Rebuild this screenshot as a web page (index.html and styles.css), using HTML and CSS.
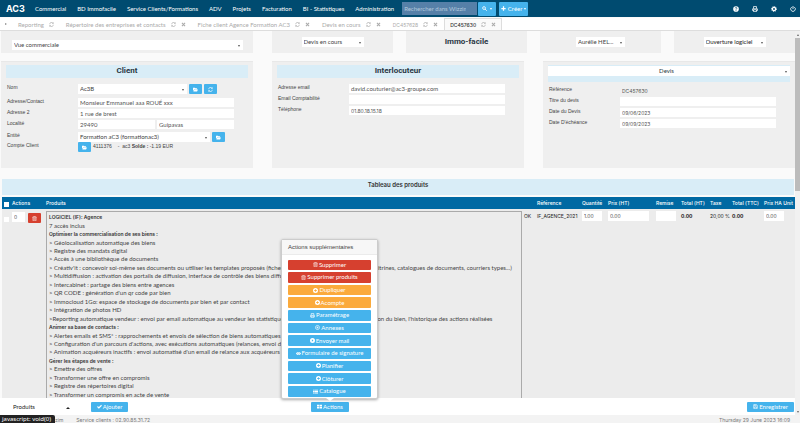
FILE: index.html
```html
<!DOCTYPE html>
<html lang="fr">
<head>
<meta charset="utf-8">
<meta name="viewport" content="width=device-width, initial-scale=1">
<title>AC3 - DC457630</title>
<link rel="stylesheet" href="styles.css">
</head>
<body>
<svg class="sprite" aria-hidden="true">
  <symbol id="refresh" viewBox="0 0 16 16"><path d="M2 7a6 6 0 0 1 11-3M14 9a6 6 0 0 1-11 3M14 1v4h-4M2 15v-4h4" fill="none" stroke="currentColor" stroke-width="2"/></symbol>
  <symbol id="close" viewBox="0 0 16 16"><path d="M3 3l10 10M13 3L3 13" stroke="currentColor" stroke-width="3.4"/></symbol>
  <symbol id="folder" viewBox="0 0 16 16"><path d="M0 2h6l2 2h5v3H4L0 13zM4.500 8H16l-3 6H1z" fill="currentColor"/></symbol>
  <symbol id="trash" viewBox="0 0 16 16"><path d="M1 4h14M5.500 3.500V1h5v2.500M3 4v11h10V4M6.300 6.500v6M9.700 6.500v6" fill="none" stroke="currentColor" stroke-width="1.700"/></symbol>
  <symbol id="plus-circle" viewBox="0 0 16 16"><path fill-rule="evenodd" d="M8 0a8 8 0 1 0 0 16A8 8 0 0 0 8 0zM6.700 4h2.600v2.700H12v2.600H9.300V12H6.700V9.300H4V6.700h2.700z" fill="currentColor"/></symbol>
  <symbol id="arrow-circle" viewBox="0 0 16 16"><path fill-rule="evenodd" d="M8 0a8 8 0 1 0 0 16A8 8 0 0 0 8 0zM6 4l5 4-5 4z" fill="currentColor"/></symbol>
  <symbol id="ring" viewBox="0 0 16 16"><circle cx="8" cy="8" r="6.500" fill="none" stroke="currentColor" stroke-width="2"/><path d="M5 8h6M8 5v6" stroke="currentColor" stroke-width="2"/></symbol>
  <symbol id="print" viewBox="0 0 16 16"><path d="M4 7V1.500h8V7M4 12H1.500V7.500h13V12H12M4 10h8v5H4z" fill="none" stroke="currentColor" stroke-width="2"/></symbol>
  <symbol id="eye" viewBox="0 0 16 16"><path fill-rule="evenodd" d="M0 8c4-6.500 12-6.500 16 0-4 6.500-12 6.500-16 0zm8-3a3 3 0 1 0 0 6 3 3 0 0 0 0-6z" fill="currentColor"/><circle cx="8" cy="8" r="1.800" fill="currentColor"/></symbol>
  <symbol id="list" viewBox="0 0 16 16"><path d="M0 2h3v3H0zM4 2h12v3H4zM0 6.500h3v3H0zM4 6.500h12v3H4zM0 11h3v3H0zM4 11h12v3H4z" fill="currentColor"/></symbol>
  <symbol id="grid" viewBox="0 0 16 16"><path d="M0 2h7.300v5.300H0zM8.700 2H16v5.300H8.700zM0 8.700h7.300V14H0zM8.700 8.700H16V14H8.700z" fill="currentColor"/></symbol>
  <symbol id="check" viewBox="0 0 16 16"><path d="M1.500 8l4.500 4.500L14.500 4" fill="none" stroke="currentColor" stroke-width="3.600"/></symbol>
  <symbol id="save" viewBox="0 0 16 16"><path d="M2 2h9l3 3v9H2zM5 2v4h5V2M4.500 14V9.500h7V14" fill="none" stroke="currentColor" stroke-width="1.800"/></symbol>
  <symbol id="search" viewBox="0 0 16 16"><circle cx="6.500" cy="6.500" r="4.500" fill="none" stroke="currentColor" stroke-width="2.600"/><path d="M10 10l5 5" stroke="currentColor" stroke-width="3"/></symbol>
  <symbol id="plus" viewBox="0 0 16 16"><path d="M8 1v14M1 8h14" stroke="currentColor" stroke-width="4"/></symbol>
  <symbol id="help" viewBox="0 0 16 16"><circle cx="8" cy="8" r="7.500" fill="currentColor"/><path d="M5.700 6.200C5.700 3 10.600 3.200 10.500 6 10.400 7.800 8 7.600 8 9.800M8 11v2" fill="none" stroke="#004b70" stroke-width="1.900"/></symbol>
  <symbol id="gear" viewBox="0 0 16 16"><circle cx="8" cy="8" r="4.300" fill="none" stroke="currentColor" stroke-width="3.600"/><circle cx="8" cy="8" r="6.700" fill="none" stroke="currentColor" stroke-width="2.400" stroke-dasharray="2.700 2.560"/></symbol>
  <symbol id="power" viewBox="0 0 16 16"><path d="M4.500 3a6.200 6.200 0 1 0 7 0M8 0v8" fill="none" stroke="currentColor" stroke-width="2.200"/></symbol>
</svg>

<header class="navbar">
  <a class="brand" href="#">AC3</a>
  <nav class="menu">
    <a href="#">Commercial</a><a href="#">BD Immofacile</a><a href="#">Service Clients/Formations</a><a href="#">ADV</a><a href="#">Projets</a><a href="#">Facturation</a><a href="#">BI - Statistiques</a><a href="#">Administration</a>
  </nav>
  <form class="search">
    <input type="search" aria-label="Rechercher" placeholder="Rechercher dans Wizzim">
    <button type="button" class="btn" aria-label="Rechercher"><svg class="icon"><use href="#search"/></svg><span class="caret"></span></button>
  </form>
  <button type="button" class="btn create"><svg class="icon"><use href="#plus"/></svg>Créer<span class="caret"></span></button>
  <div class="tools">
    <a href="#" aria-label="Aide"><svg class="icon"><use href="#help"/></svg></a>
    <a href="#" aria-label="Imprimer"><svg class="icon"><use href="#print"/></svg></a>
    <a href="#" aria-label="Réglages"><svg class="icon"><use href="#gear"/></svg></a>
    <a href="#" aria-label="Déconnexion"><svg class="icon"><use href="#power"/></svg></a>
  </div>
</header>

<nav class="tabs">
  <span class="tab-arrow"></span>
  <a class="tab" href="#">Reporting<svg class="icon"><use href="#refresh"/></svg></a>
  <a class="tab" href="#">Répertoire des entreprises et contacts<svg class="icon"><use href="#refresh"/></svg><svg class="icon"><use href="#close"/></svg></a>
  <a class="tab" href="#">Fiche client Agence Formation AC3<svg class="icon"><use href="#refresh"/></svg><svg class="icon"><use href="#close"/></svg></a>
  <a class="tab" href="#">Devis en cours<svg class="icon"><use href="#refresh"/></svg><svg class="icon"><use href="#close"/></svg></a>
  <a class="tab code" href="#">DC457628<svg class="icon"><use href="#refresh"/></svg><svg class="icon"><use href="#close"/></svg></a>
  <a class="tab code active" href="#"><span>DC457630</span><svg class="icon"><use href="#refresh"/></svg><svg class="icon"><use href="#close"/></svg></a>
</nav>

<div class="workspace">
  <div class="column">
    <main class="content">
      <div class="filters">
        <div class="filter wide"><div class="select view"><select aria-label="Vue"><option>Vue commerciale</option></select></div></div>
        <div class="filter"><div class="select status"><select aria-label="Statut"><option>Devis en cours</option></select></div></div>
        <div class="filter"><h2>Immo-facile</h2></div>
        <div class="filter"><div class="select owner"><select aria-label="Responsable"><option>Aurélie HEL...</option></select></div></div>
        <div class="filter"><div class="select opening"><select aria-label="Ouverture"><option>Ouverture logiciel</option></select></div></div>
      </div>

      <div class="cards">
        <section class="card">
          <h2 class="card-title">Client</h2>
          <div class="fields">
            <div class="field tall"><label for="nom">Nom</label><div class="select name"><select id="nom"><option>Ac3B</option></select></div><button type="button" class="btn square" aria-label="Ouvrir"><svg class="icon"><use href="#folder"/></svg></button><button type="button" class="btn square" aria-label="Actualiser"><svg class="icon"><use href="#refresh"/></svg></button></div>
            <div class="field"><label for="adr">Adresse/Contact</label><div class="inputs"><input id="adr" value="Monsieur Emmanuel aaa ROUÉ xxx"></div></div>
            <div class="field"><label for="adr2">Adresse 2</label><div class="inputs"><input id="adr2" value="1 rue de brest"></div></div>
            <div class="field"><label for="cp">Localité</label><div class="inputs"><input id="cp" value="29490"><input aria-label="Ville" value="Guipavas"></div></div>
            <div class="field entity"><label for="ent">Entité</label><div class="select entity-name"><select id="ent"><option>Formation aC3 (formationac3)</option></select></div><button type="button" class="btn square" aria-label="Ouvrir l'entité"><svg class="icon"><use href="#folder"/></svg></button></div>
            <div class="field account"><span class="label">Compte Client</span><button type="button" class="btn square" aria-label="Ouvrir le compte"><svg class="icon"><use href="#folder"/></svg></button><span>4111376</span><span class="balance">- &nbsp;ac3 <b>Solde :</b> -1.19 EUR</span></div>
          </div>
        </section>

        <section class="card">
          <h2 class="card-title">Interlocuteur</h2>
          <div class="fields">
            <div class="field"><label for="mail">Adresse email</label><div class="inputs"><input id="mail" value="david.couturier@ac3-groupe.com"></div></div>
            <div class="field"><label for="compta">Email Comptabilité</label><div class="inputs"><input id="compta"></div></div>
            <div class="field"><label for="tel">Téléphone</label><div class="inputs"><input id="tel" class="number" value="01.80.18.15.18"></div></div>
          </div>
        </section>

        <section class="card">
          <div class="card-title type"><div class="select"><select aria-label="Type"><option>Devis</option></select></div></div>
          <div class="fields compact">
            <div class="field"><label for="ref">Référence</label><div class="inputs"><input id="ref" class="plain number" value="DC457630" readonly></div></div>
            <div class="field"><label for="titre">Titre du devis</label><div class="inputs"><input id="titre"></div></div>
            <div class="field"><label for="date">Date du Devis</label><div class="inputs"><input id="date" class="number" value="09/06/2023"></div></div>
            <div class="field"><label for="ech">Date D'échéance</label><div class="inputs"><input id="ech" class="number" value="09/09/2023"></div></div>
          </div>
        </section>
      </div>

      <h3 class="section-title">Tableau des produits</h3>
      <table class="products">
        <colgroup><col class="c-check"><col class="c-actions"><col><col class="c-ok"><col class="c-ref"><col class="c-qty"><col class="c-price"><col class="c-disc"><col class="c-total"><col class="c-tax"><col class="c-ttc"><col class="c-ha"></colgroup>
        <thead><tr><th><input type="checkbox" aria-label="Tout sélectionner"></th><th>Actions</th><th>Produits</th><th></th><th>Référence</th><th>Quantité</th><th>Prix (HT)</th><th>Remise</th><th>Total (HT)</th><th>Taxe</th><th>Total (TTC)</th><th>Prix HA Unit</th></tr></thead>
        <tbody><tr>
          <td><input type="checkbox" aria-label="Sélectionner la ligne"></td>
          <td><div class="row-actions"><input aria-label="Ordre" value="0"><button type="button" class="btn danger square" aria-label="Supprimer la ligne"><svg class="icon"><use href="#trash"/></svg></button></div></td>
          <td class="desc-cell"><div class="description">
            <strong>LOGICIEL (IF): Agence</strong>
            <span>7 accès inclus</span>
            <strong>Optimiser la commercialisation de ses biens :</strong>
            <span>&gt; Géolocalisation automatique des biens</span>
            <span>&gt; Registre des mandats digital</span>
            <span>&gt; Accès à une bibliothèque de documents</span>
            <span>&gt; Créativ'it : concevoir soi-même ses documents ou utiliser les templates proposés (fiches commerciales, affichettes pour les vitrines, catalogues de documents, courriers types...)</span>
            <span>&gt; Multidiffusion : activation des portails de diffusion, interface de contrôle des biens diffusés</span>
            <span>&gt; Intercabinet : partage des biens entre agences</span>
            <span>&gt; QR CODE : génération d'un qr code par bien</span>
            <span>&gt; Immocloud 1Go: espace de stockage de documents par bien et par contact</span>
            <span>&gt; Intégration de photos HD</span>
            <span>&gt;Reporting automatique vendeur : envoi par email automatique au vendeur les statistiques de consultation et commercialisation du bien, l'historique des actions réalisées</span>
            <strong>Animer sa base de contacts :</strong>
            <span>&gt; Alertes emails et SMS* : rapprochements et envois de sélection de biens automatiques par email</span>
            <span>&gt; Configuration d'un parcours d'actions, avec exécutions automatiques (relances, envoi d'email)</span>
            <span>&gt; Animation acquéreurs inactifs : envoi automatisé d'un email de relance aux acquéreurs sans activité récente (selon critères)</span>
            <strong>Gérer les étapes de vente :</strong>
            <span>&gt; Emettre des offres</span>
            <span>&gt; Transformer une offre en compromis</span>
            <span>&gt; Registre des répertoires digital</span>
            <span>&gt; Transformer un compromis en acte de vente</span>
          </div></td>
          <td class="dark">OK</td><td class="dark">IF_AGENCE_2021</td>
          <td><input class="cell" aria-label="Quantité" value="1.00"></td>
          <td><input class="cell price" aria-label="Prix" value="0.00"></td>
          <td><input class="cell" aria-label="Remise"></td>
          <td class="dark"><b>0.00</b></td><td class="dark">20,00 %</td><td class="dark"><b>0.00</b></td>
          <td><input class="cell" aria-label="Prix HA" value="0.00"></td>
        </tr></tbody>
      </table>
    </main>

    <footer class="actionbar">
      <div class="select up kind"><select aria-label="Catégorie"><option>Produits</option></select></div>
      <button type="button" class="btn add"><svg class="icon"><use href="#check"/></svg>Ajouter</button>
      <div class="more">
        <div class="popover">
          <h4>Actions supplémentaires</h4>
          <div class="popover-body">
            <button type="button" class="btn danger"><svg class="icon"><use href="#trash"/></svg>Supprimer</button>
            <button type="button" class="btn danger"><svg class="icon"><use href="#trash"/></svg>Supprimer produits</button>
            <button type="button" class="btn warning"><svg class="icon"><use href="#plus-circle"/></svg>Dupliquer</button>
            <button type="button" class="btn warning"><svg class="icon"><use href="#plus-circle"/></svg>Acompte</button>
            <button type="button" class="btn"><svg class="icon"><use href="#print"/></svg>Paramétrage</button>
            <button type="button" class="btn"><svg class="icon"><use href="#ring"/></svg>Annexes</button>
            <button type="button" class="btn"><svg class="icon"><use href="#arrow-circle"/></svg>Envoyer mail</button>
            <button type="button" class="btn"><svg class="icon"><use href="#eye"/></svg>Formulaire de signature</button>
            <button type="button" class="btn"><svg class="icon"><use href="#plus-circle"/></svg>Planifier</button>
            <button type="button" class="btn"><svg class="icon"><use href="#plus-circle"/></svg>Clôturer</button>
            <button type="button" class="btn"><svg class="icon"><use href="#list"/></svg>Catalogue</button>
          </div>
        </div>
        <button type="button" class="btn"><svg class="icon"><use href="#grid"/></svg>Actions</button>
      </div>
      <button type="button" class="btn save"><svg class="icon"><use href="#save"/></svg>Enregistrer</button>
    </footer>
  </div>
  <div class="scrollbar"><span class="caret flip"></span><div class="thumb"></div><span class="caret"></span></div>
</div>

<div class="statusbar"><div class="link-hint">javascript: void(0)</div><span class="site">zim</span><span>Service clients : 02.90.85.31.72</span><span class="date">Thursday 29 June 2023 16:09</span></div>
</body>
</html>
```
FILE: styles.css
```css
* { box-sizing: border-box; }

:root {
  --ui: Lato, "Open Sans", sans-serif;
  --number: Inter, "Open Sans", sans-serif;
  --label: "Liberation Sans", Arial, sans-serif;
  --blue: #45b3ec;
  --pale: #d9edf7;
  --panel: #efefef;
}

body {
  margin: 0;
  height: 100vh;
  display: flex;
  flex-direction: column;
  overflow: hidden;
  background: #fafafa;
  color: #444;
  font: 6px/8px var(--ui);
}

a { color: inherit; text-decoration: none; }
h2, h3, h4 { margin: 0; }
input, select, button { font: inherit; color: inherit; border: 0; margin: 0; padding: 0; min-width: 0; border-radius: 0; }
input:not([type="checkbox"]) { background: #fff; color: #555; padding: 0 2px; }
input.number { font: 5px/8px var(--number); }
.sprite { display: none; }
.icon { width: 5px; height: 5px; flex: none; }

.btn {
  display: inline-flex;
  align-items: center;
  justify-content: center;
  gap: 1px;
  height: 10px;
  border-radius: 1px;
  background: var(--blue);
  color: #fff;
  font: 6px/8px var(--ui);
  white-space: nowrap;
}
.btn.danger { background: #d6402f; }
.btn.warning { background: #fbaa3c; }
.btn.square { width: 13px; flex: none; }

.caret { border: 1px solid transparent; border-top: 2px solid currentColor; border-bottom: 0; width: 0; height: 0; }
.caret.flip { border-top: 0; border-bottom: 2px solid currentColor; }

.select { position: relative; background: #fff; height: 10px; }
.select select { appearance: none; display: block; width: 100%; height: 100%; padding: 0 7px 0 2px; background: transparent; }
.select::after { content: ""; position: absolute; right: 3px; top: 50%; border: 1px solid transparent; border-top: 2px solid #555; border-bottom: 0; pointer-events: none; }
.select.up::after { border: 2px solid transparent; border-top: 0; border-bottom: 2px solid #222; right: 4px; }

.navbar {
  display: flex;
  align-items: center;
  flex: none;
  height: 17px;
  padding: 0 4px 0 6px;
  background: #004b70;
  color: #fff;
}
.brand { width: 29px; font: 700 9px/17px var(--number); }
.menu { display: flex; gap: 11px; white-space: nowrap; }
.search { display: flex; gap: 1px; margin-left: 8px; }
.search input { width: 75px; height: 13px; background: #5680a8; color: #fff; appearance: none; }
.search input::placeholder { color: #b3c8dc; opacity: 1; }
.search .btn { width: 18px; height: 14px; gap: 3px; }
.create.btn { width: 29px; height: 14px; margin-left: 3px; gap: 2px; }
.tools { display: flex; gap: 13px; margin-left: auto; }
.tools a { display: flex; }
.tools .icon { width: 6px; height: 6px; }

.tabs { display: flex; flex: none; height: 13px; margin-top: 1px; background: #fff; border-bottom: 1px solid #ddd; color: #aaa; white-space: nowrap; }
.tab-arrow { align-self: center; margin: 0 5px; border: 1px solid transparent; border-left: 2px solid #888; border-right: 0; }
.tab { display: flex; align-items: center; gap: 5px; padding: 0 5px; border: 1px solid transparent; border-bottom: 0; }
.tab.code { font: 5px/8px var(--number); }
.tab.active { border-color: #ddd; border-radius: 1px 1px 0 0; background: #fafafa; }
.tab.active span { color: #333; font-weight: 500; }

.workspace { display: flex; flex: 1; min-height: 0; }
.column { display: flex; flex-direction: column; flex: 1; min-width: 0; }
.content { flex: 1; min-height: 0; overflow: hidden; padding: 0 0 0 1px; }

.filters { display: grid; grid-template-columns: 258fr 121fr 121fr 121fr 121fr; gap: 13px; height: 22px; }
.filter { display: flex; align-items: center; justify-content: center; background: var(--panel); }
.filter.wide { margin-right: 6px; padding: 6px 10px 0 11px; }
.filter h2, .card-title { font: 700 8px/12px Roboto, sans-serif; color: #2b3844; text-align: center; }
.view { width: 100%; }
.status { width: 62px; }
.owner { width: 49px; }
.opening { width: 62px; color: #222; }

.cards { display: grid; grid-template-columns: repeat(3, 1fr); gap: 19px; margin-top: 8px; }
.card { min-height: 107px; padding: 3px 5px; background: var(--panel); border-top: 1px solid #e8e8e8; }
.card-title { height: 13px; background: var(--pale); }
.card-title.type { height: 17px; padding-top: 1px; margin-bottom: 4px; font: 6px/8px var(--ui); }
.type select { text-align-last: center; }
.fields { padding-top: 6px; }
.fields.compact { padding-top: 0; }
.field { display: flex; align-items: flex-start; height: 9px; margin-bottom: 2px; padding-right: 14px; gap: 2px; }
.field label, .field .label { width: 70px; flex: none; padding-left: 1px; font: 5px/7px var(--label); color: #444; }
.field.tall { height: 10px; margin-bottom: 4px; }
.field.entity { height: 10px; margin: 3px 0 0; }
.inputs { display: flex; flex: 1; gap: 2px; min-width: 0; height: 9px; }
.inputs input { flex: 1; width: 0; }
.inputs input.plain { background: transparent; }
.name { width: 109px; }
.entity-name { width: 132px; }
.account { font: 5px/8px var(--label); }
.balance { margin-left: 4px; }

.section-title { height: 16px; margin: 11px 1px 2px; background: var(--pale); font: 600 6px/12px var(--number); text-align: center; color: #333; }

.products { width: calc(100% - 1px); margin-left: 1px; table-layout: fixed; border-collapse: collapse; background: #ececec; font: 5px/8px var(--number); }
.products th { height: 12px; padding: 0; background: #0069a3; color: #fff; font-weight: 500; text-align: left; white-space: nowrap; }
.products td { padding: 2px 0 0; vertical-align: top; }
.c-check { width: 10px; }
.c-actions { width: 34px; }
.c-ok { width: 13px; }
.c-ref { width: 45px; }
.c-qty { width: 26px; }
.c-price { width: 48px; }
.c-disc { width: 25px; }
.c-total { width: 29px; }
.c-tax { width: 22px; }
.c-ttc { width: 32px; }
.c-ha { width: 31px; }
.products input[type="checkbox"] { appearance: none; display: block; width: 5px; height: 5px; margin: 2px 0 0 2px; background: #fff; }
.products td input[type="checkbox"] { margin-top: 6px; }
.row-actions { display: flex; gap: 3px; padding-top: 1px; }
.row-actions input { width: 13px; height: 10px; }
.row-actions .btn { margin-top: 1px; }
.products .desc-cell { padding: 2px 2px 0 0; }
.description { display: grid; grid-auto-rows: 1fr; align-items: center; height: 189px; padding: 1px 2px; border: 1px solid #aaa; border-bottom: 0; white-space: nowrap; overflow: hidden; color: #444; font: 6px/8px var(--ui); }
.description strong { font: 600 5px/8px var(--number); color: #333; }
.products .dark { padding-top: 3px; color: #222; white-space: nowrap; }
.cell { display: block; width: 20px; height: 10px; }
.cell.price { width: 41px; }

.actionbar { display: flex; align-items: center; flex: none; height: 17px; padding-left: 11px; background: #fff; }
.kind { width: 63px; color: #222; }
.add { width: 37px; margin-left: 17px; }
.more { position: relative; margin-left: 183px; }
.more > .btn { width: 38px; }
.save { width: 47px; margin-left: auto; margin-right: 1px; }

.popover { position: absolute; bottom: 13px; left: 50%; width: 97px; margin-left: -49px; background: #fff; border: 1px solid #ccc; border-radius: 2px; box-shadow: 0 1px 3px #0005; }
.popover::after { content: ""; position: absolute; top: 100%; left: 50%; margin-left: -4px; border: 4px solid transparent; border-top: 3px solid #fff; border-bottom: 0; }
.popover h4 { padding: 0 6px; background: #f7f7f7; border-bottom: 1px solid #ebebeb; font: 6px/14px var(--label); color: #444; }
.popover-body { display: grid; grid-auto-rows: 1fr; gap: 2px; height: 143px; padding: 5px 6px 1px; }
.popover .btn { height: auto; }

.scrollbar { display: flex; flex-direction: column; align-items: center; flex: none; width: 5px; padding: 3px 0 2px; background: #f1f1f1; color: #666; }
.thumb { width: 5px; height: 153px; margin: 2px 0 auto; background: #bcbcbc; }

.statusbar { display: flex; flex: none; height: 8px; padding-right: 10px; background: #f3f3f3; color: #777; overflow: hidden; white-space: nowrap; font: 5px/10px var(--number); }
.site { margin-right: 13px; }
.statusbar .date { margin-left: auto; }
.link-hint { width: 55px; padding-left: 2px; background: #222; color: #fff; font: 6px/8px "Noto Sans", sans-serif; border-radius: 0 2px 0 0; }
```
